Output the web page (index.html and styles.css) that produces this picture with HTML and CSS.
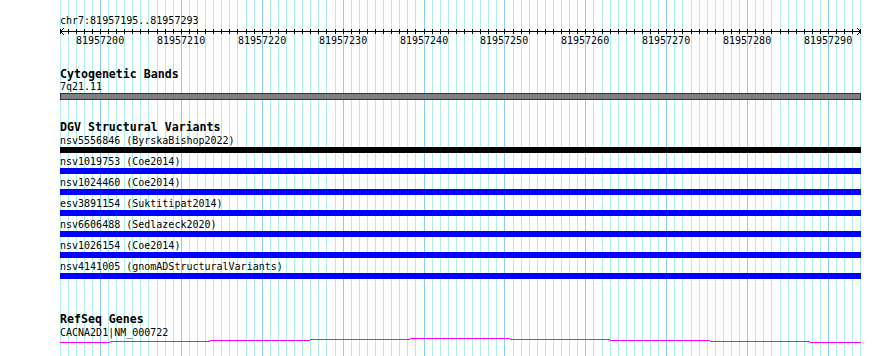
FILE: index.html
```html
<!DOCTYPE html>
<html lang="en">
<head>
    <meta charset="UTF-8">
    <meta name="viewport" content="width=device-width, initial-scale=1.0">
    <title>chr7:81957195..81957293</title>
    <link rel="stylesheet" href="styles.css">
</head>
<body>
    <div class="panel">
        <svg class="grid" id="grid" width="890" height="356"></svg>
        <div class="tracks">
            <div class="ruler">
                <div class="feature-name">chr7:81957195..81957293</div>
                <svg class="axis" id="axis" width="801" height="9"></svg>
                <div class="tick-labels" id="tickLabels"></div>
            </div>
            <div class="track cyto">
                <div class="track-title">Cytogenetic Bands</div>
                <div class="feature-name">7q21.11</div>
                <div class="band"></div>
            </div>
            <div class="track dgv">
                <div class="track-title">DGV Structural Variants</div>
                <div class="variant">
                    <div class="feature-name">nsv5556846 (ByrskaBishop2022)</div>
                    <div class="bar bar-black"></div>
                </div>
                <div class="variant">
                    <div class="feature-name">nsv1019753 (Coe2014)</div>
                    <div class="bar"></div>
                </div>
                <div class="variant">
                    <div class="feature-name">nsv1024460 (Coe2014)</div>
                    <div class="bar"></div>
                </div>
                <div class="variant">
                    <div class="feature-name">esv3891154 (Suktitipat2014)</div>
                    <div class="bar"></div>
                </div>
                <div class="variant">
                    <div class="feature-name">nsv6606488 (Sedlazeck2020)</div>
                    <div class="bar"></div>
                </div>
                <div class="variant">
                    <div class="feature-name">nsv1026154 (Coe2014)</div>
                    <div class="bar"></div>
                </div>
                <div class="variant">
                    <div class="feature-name">nsv4141005 (gnomADStructuralVariants)</div>
                    <div class="bar"></div>
                </div>
            </div>
            <div class="track genes">
                <div class="track-title">RefSeq Genes</div>
                <div class="feature-name">CACNA2D1|NM_000722</div>
                <svg class="intron" width="801" height="5" shape-rendering="crispEdges">
                    <rect x="0" y="4" width="50" height="1"/>
                    <rect x="50" y="3" width="100" height="1"/>
                    <rect x="150" y="2" width="100" height="1"/>
                    <rect x="250" y="1" width="100" height="1"/>
                    <rect x="350" y="0" width="100" height="1"/>
                    <rect x="450" y="1" width="100" height="1"/>
                    <rect x="550" y="2" width="100" height="1"/>
                    <rect x="650" y="3" width="100" height="1"/>
                    <rect x="750" y="4" width="51" height="1"/>
                </svg>
            </div>
        </div>
    </div>
    <script>
        const NS = "http://www.w3.org/2000/svg";
        const start = 81957195;
        const grid = document.getElementById("grid");
        const axis = document.getElementById("axis");
        const tickLabels = document.getElementById("tickLabels");
        function px(svg, x, y, w, h, cls) {
            let r = document.createElementNS(NS, "rect");
            r.setAttribute("x", x);
            r.setAttribute("y", y);
            r.setAttribute("width", w);
            r.setAttribute("height", h);
            if (cls) r.setAttribute("class", cls);
            svg.appendChild(r);
        }
        // one grid line and one tick per base
        for (let i = 0; i < 100; i++) {
            let x = Math.floor(i * 8.09);
            let major = (start + i) % 10 === 0;
            px(grid, 60 + x, 0, 1, 356, major ? "major" : "minor");
            px(axis, x, 3, 1, 5);
            if (major) {
                let label = document.createElement("div");
                label.className = "tick-label";
                label.innerText = start + i;
                label.style.left = (x - 24) + "px";
                tickLabels.appendChild(label);
            }
        }
        px(axis, 0, 5, 801, 1);
        // arrow heads
        for (let k = 1; k <= 3; k++) {
            px(axis, k, 5 - k, 1, 1);
            px(axis, k, 5 + k, 1, 1);
            px(axis, 800 - k, 5 - k, 1, 1);
            px(axis, 800 - k, 5 + k, 1, 1);
        }
    </script>
</body>
</html>
```

FILE: styles.css
```css
body {
    margin: 0;
    background: #fff;
    color: #000;
    font-family: "DejaVu Sans Mono", "Liberation Mono", monospace;
}
.panel {
    position: relative;
    width: 890px;
    height: 356px;
    overflow: hidden;
}
.grid {
    position: absolute;
    left: 0;
    top: 0;
    shape-rendering: crispEdges;
}
.grid .minor { fill: #afeeee; }
.grid .major { fill: #87cefa; }
.tracks {
    position: relative;
    width: 801px;
    padding: 15px 0 0 60px;
}
.feature-name, .tick-label {
    font-size: 10px;
    line-height: 11px;
    height: 11px;
    white-space: pre;
}
.track-title {
    font-size: 11.6px;
    font-weight: bold;
    line-height: 11px;
    height: 11px;
    white-space: pre;
}
.axis {
    display: block;
    shape-rendering: crispEdges;
}
.tick-labels {
    position: relative;
    height: 11px;
}
.tick-label {
    position: absolute;
    top: 0;
}
.cyto { margin-top: 23px; }
.cyto .track-title { margin-bottom: 1px; }
.band {
    margin-top: 1px;
    height: 7px;
    box-sizing: border-box;
    border: 1px solid #333;
    background: #808080;
}
.dgv { margin-top: 22px; }
.variant {
    display: flex;
    flex-direction: column;
    gap: 1px;
    margin-bottom: 3px;
}
.dgv .track-title { margin-bottom: 2px; }
.bar {
    height: 6px;
    background: #0000ff;
}
.bar-black { background: #000; }
.genes { margin-top: 35px; }
.genes .track-title { margin-bottom: 2px; }
.intron {
    display: block;
    fill: #ff00ff;
}
```
